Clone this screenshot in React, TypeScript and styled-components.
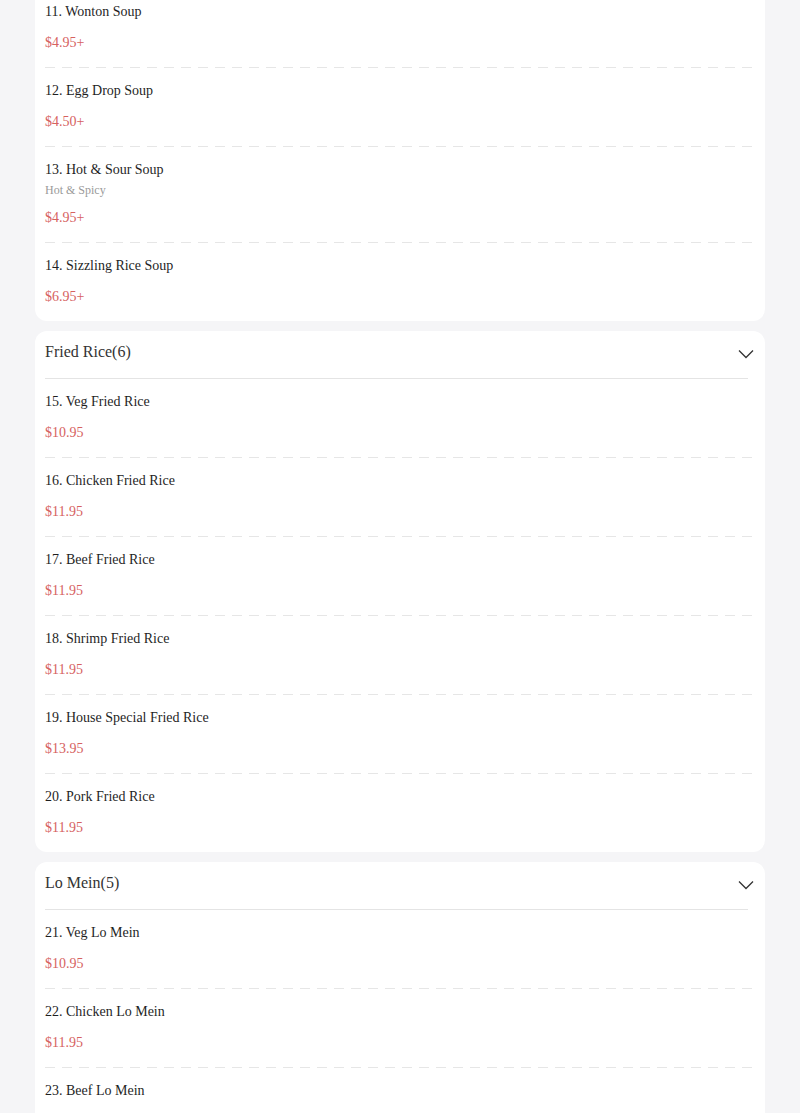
import React from "react";
import styled, { createGlobalStyle } from "styled-components";

const Global = createGlobalStyle`
  html, body { margin: 0; padding: 0; background: #f5f5f7; }
  body { font-family: "Liberation Serif", "Times New Roman", serif; }
`;

const Page = styled.div`
  padding: 0 35px;
  margin-top: -11px;
  display: flex;
  flex-direction: column;
  gap: 10px;
  overflow: hidden;
`;

const Card = styled.section<{ $cut?: boolean }>`
  background: #fff;
  border-radius: ${(p) => (p.$cut ? "0 0 12px 12px" : "12px")};
  display: flex;
  flex-direction: column;
`;

const Header = styled.div`
  display: flex;
  padding: 11px 10px 0 10px;
`;

const HeaderInner = styled.div`
  flex: 1;
  display: flex;
  justify-content: space-between;
  align-items: flex-start;
  height: 36px;
  border-bottom: 1px solid #e4e4e4;
  margin-right: 7px;
`;

const HeaderTitle = styled.div`
  font-size: 16px;
  line-height: 20px;
  color: #333;
`;

const Chevron = styled.svg`
  position: relative;
  top: 7px;
  margin-right: -6px;
  flex: none;
`;

const Item = styled.div<{ $last?: boolean }>`
  margin: 0 10px;
  padding: 13px 0 ${(p) => (p.$last ? "14px" : "15px")};
  background-image: ${(p) =>
    p.$last
      ? "none"
      : "repeating-linear-gradient(to right, #e6e6e6 0 10px, transparent 10px 17px)"};
  background-size: 100% 1px;
  background-repeat: no-repeat;
  background-position: bottom left;
`;

const Name = styled.div`
  font-size: 14px;
  line-height: 20px;
  color: #1f1f1f;
`;

const Desc = styled.div`
  font-size: 12px;
  line-height: 13px;
  margin-top: 4px;
  color: #9a9a9a;
`;

const Price = styled.div`
  font-size: 14px;
  line-height: 20px;
  margin-top: 11px;
  color: #d6625f;
`;

type MenuItem = { name: string; price: string; desc?: string };

const soups: MenuItem[] = [
  { name: "11. Wonton Soup", price: "$4.95+" },
  { name: "12. Egg Drop Soup", price: "$4.50+" },
  { name: "13. Hot & Sour Soup", price: "$4.95+", desc: "Hot & Spicy" },
  { name: "14. Sizzling Rice Soup", price: "$6.95+" },
];

const friedRice: MenuItem[] = [
  { name: "15. Veg Fried Rice", price: "$10.95" },
  { name: "16. Chicken Fried Rice", price: "$11.95" },
  { name: "17. Beef Fried Rice", price: "$11.95" },
  { name: "18. Shrimp Fried Rice", price: "$11.95" },
  { name: "19. House Special Fried Rice", price: "$13.95" },
  { name: "20. Pork Fried Rice", price: "$11.95" },
];

const loMein: MenuItem[] = [
  { name: "21. Veg Lo Mein", price: "$10.95" },
  { name: "22. Chicken Lo Mein", price: "$11.95" },
  { name: "23. Beef Lo Mein", price: "$11.95" },
  { name: "24. Shrimp Lo Mein", price: "$11.95" },
  { name: "25. House Special Lo Mein", price: "$13.95" },
];

const Items = ({ items }: { items: MenuItem[] }) => (
  <>
    {items.map((it, i) => (
      <Item key={it.name} $last={i === items.length - 1}>
        <Name>{it.name}</Name>
        {it.desc && <Desc>{it.desc}</Desc>}
        <Price>{it.price}</Price>
      </Item>
    ))}
  </>
);

const SectionHeader = ({ title }: { title: string }) => (
  <Header>
    <HeaderInner>
      <HeaderTitle>{title}</HeaderTitle>
      <Chevron width="16" height="10" viewBox="0 0 16 10">
        <path d="M1 1.5 L8 8.5 L15 1.5" fill="none" stroke="#333" strokeWidth="1.3" />
      </Chevron>
    </HeaderInner>
  </Header>
);

export default function App() {
  return (
    <>
      <Global />
      <Page>
        <Card $cut>
          <Items items={soups} />
        </Card>
        <Card>
          <SectionHeader title="Fried Rice(6)" />
          <Items items={friedRice} />
        </Card>
        <Card>
          <SectionHeader title="Lo Mein(5)" />
          <Items items={loMein} />
        </Card>
      </Page>
    </>
  );
}
